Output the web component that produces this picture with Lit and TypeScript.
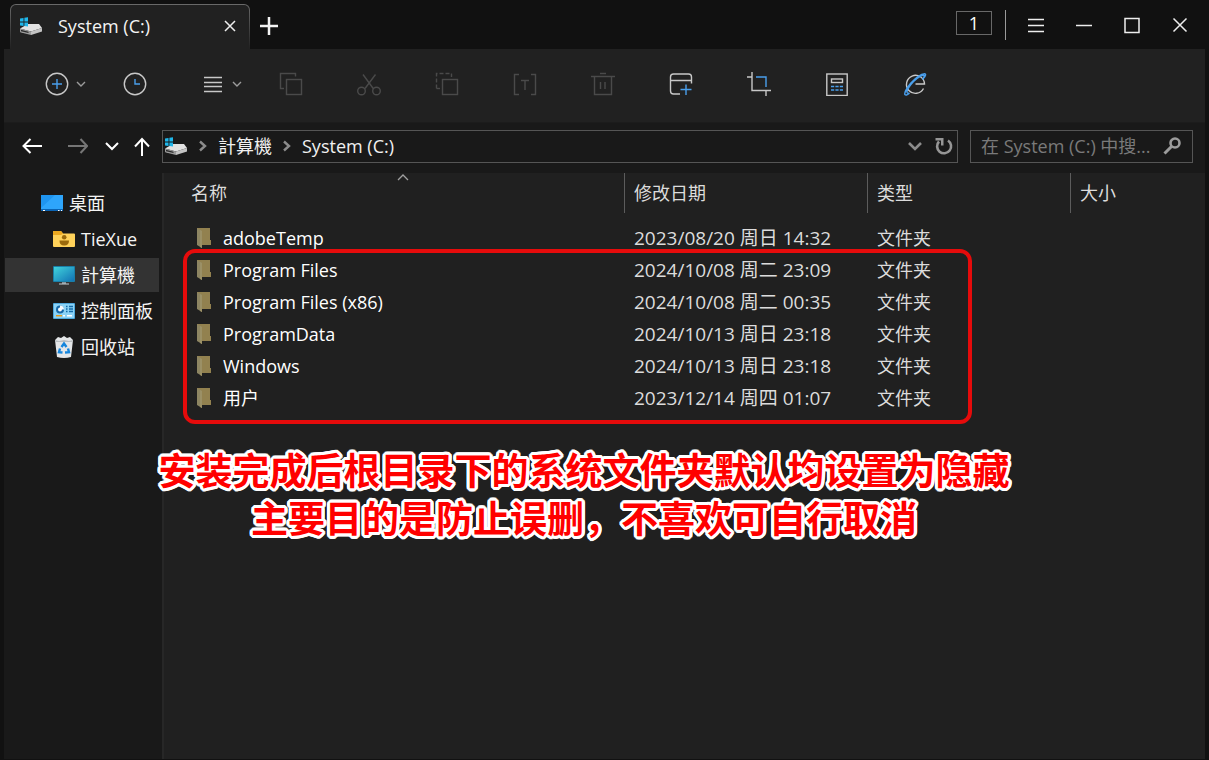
import { LitElement, html, svg, css, TemplateResult } from "lit";
import { customElement, property } from "lit/decorators.js";
import { classMap } from "lit/directives/class-map.js";

const drive = html`<svg class="drive" width="24" height="20" viewBox="0 0 24 20" aria-hidden="true">
  <path d="M1 12.500 L9 8 H20 L23 12 L12 15.500 Z" fill="#e2e2e2" />
  <path d="M1 12.500 L12 15.500 V19 L2 16.600 Q1 16.300 1 15.500 Z" fill="#9c9c9c" />
  <path d="M12 15.500 L23 12 V15.500 L12 19 Z" fill="#c4c4c4" />
  <path d="M2 13.800 L9.500 15.800 V17 L2 15.200 Z" fill="#2c2c2c" />
  <path d="M1 2.600 L4.500 2 V5.600 H1 Z M5.400 1.800 L9 1.200 V5.600 H5.400 Z M1 6.500 H4.500 V10 L1 9.500 Z M5.400 6.500 H9 V10.600 L5.400 10.100 Z" fill="#1fb6ea" />
</svg>`;

const crumbArrow = html`<svg width="10" height="14" viewBox="0 0 10 14" aria-hidden="true">
  <path d="M2 2.500 L7 7 L2 11.500" fill="none" stroke="#8c8c8c" stroke-width="2.400" />
</svg>`;

const smallChevron = html`<svg class="chev" width="12" height="12" viewBox="0 0 12 12" aria-hidden="true">
  <path d="M2 4 L6 8 L10 4" fill="none" stroke="#9c9c9c" stroke-width="1.400" />
</svg>`;

const tools: { label: string; icon: TemplateResult; off?: boolean; menu?: boolean }[] = [
  {
    label: "新建",
    menu: true,
    icon: svg`<circle cx="12" cy="12" r="10.700" /><path class="blue" d="M12 7 V17 M7 12 H17" />`,
  },
  {
    label: "历史",
    icon: svg`<circle cx="12" cy="12" r="10.700" /><path class="blue" d="M12 7 V12 H17" />`,
  },
  {
    label: "布局",
    menu: true,
    icon: svg`<path class="thin" d="M3 5.500 H21 M3 10.500 H21 M3 14.500 H21 M3 19.500 H21" />`,
  },
  {
    label: "复制",
    off: true,
    icon: svg`<path d="M16.500 4.500 V1.500 H1.500 V16.500 H5" /><rect x="7.500" y="7.500" width="15" height="15" />`,
  },
  {
    label: "剪切",
    off: true,
    icon: svg`<path d="M6 2.500 L16.200 16.500 M18.500 2.500 L8 16.500" /><circle cx="4.500" cy="19" r="3.800" /><circle cx="19.500" cy="19" r="3.800" />`,
  },
  {
    label: "粘贴",
    off: true,
    icon: svg`<path stroke-dasharray="4 2" d="M1.500 16.500 V1.500 H16.500 V5" /><path d="M1.500 16.500 H5" /><rect x="7.500" y="7.500" width="15" height="15" />`,
  },
  {
    label: "重命名",
    off: true,
    icon: svg`<path d="M6 2.500 H1.500 V22.500 H6 M18 2.500 H22.500 V22.500 H18 M8 8.500 H16 M12 8.500 V18" />`,
  },
  {
    label: "删除",
    off: true,
    icon: svg`<path d="M0 4.500 H24 M9 1.500 H15 M3.500 4.500 V22.500 H20.500 V4.500 M9.500 10 V17 M14 10 V17" />`,
  },
  {
    label: "新窗口",
    icon: svg`<path d="M11 22 H4.500 Q1.500 22 1.500 19 V5 Q1.500 2 4.500 2 H19.500 Q22.500 2 22.500 5 V11.500 M1.500 8.500 H22.500" /><path class="blue" d="M17 12.500 V23 M11.500 17.500 H22.500" />`,
  },
  {
    label: "截图",
    icon: svg`<path d="M0 5 H5 M5 0 V18.500 H24 M19 18.500 V24" /><path class="blue" d="M9 5 H19 V15" />`,
  },
  {
    label: "计算器",
    icon: svg`<rect x="1.800" y="2" width="20.400" height="21.500" /><rect x="6.500" y="7" width="11" height="3.500" /><path class="blue" stroke-dasharray="3.200 1.200" d="M6 14.500 H18 M6 18 H18" />`,
  },
  {
    label: "浏览器",
    icon: svg`<path d="M20.500 16.500 A9 9 0 1 1 21.500 12 H12.500" /><path class="blue" d="M19.500 7.500 C23.500 3.500 23.500 1 20.500 2 C15.500 3 8 10 4.500 15.500 C1 21 1 23.500 3.500 23 C4.500 22.800 5.500 22 6.500 21.200 C2.500 22 3.500 18 7.500 13 C11.500 8 17.500 3.500 20.500 3 C21.800 3 21.300 5 19.500 7.500" />`,
  },
];

const placeIcons = {
  desktop: svg`<rect y="3" width="22" height="16" fill="#1f95f0" /><path d="M0 16 L14 3 H22 V17 H0 Z" fill="#35adff" opacity=".7" /><rect y="17" width="22" height="2" fill="#0a64b4" /><path d="M2 18.500 H4 M17 18.500 H18.500 M20 18.500 H21" stroke="#fff" />`,
  user: svg`<path d="M0 4 Q0 3 1 3 H8 L10 5.500 H21 Q22 5.500 22 6.500 V18 Q22 19 21 19 H1 Q0 19 0 18 Z" fill="#ffd25a" /><path d="M0 4 Q0 3 1 3 H8 L10 5.500 L8 7 H0 Z" fill="#eda920" /><circle cx="11.200" cy="9.300" r="2.300" fill="#9b6a0c" /><path d="M6.500 12.500 H16 Q16 17.500 11.200 17.500 Q6.500 17.500 6.500 12.500 Z" fill="#9b6a0c" />`,
  computer: svg`<defs><linearGradient id="screen" x1="0" y1="0" x2="1" y2="1"><stop offset="0" stop-color="#40d3dc" /><stop offset="1" stop-color="#1273b4" /></linearGradient></defs><rect y="2" width="22" height="16" rx="1" fill="#1a7fa8" /><rect x="1" y="3" width="20" height="14" fill="url(#screen)" /><path d="M9 18 H13 V20 H9 Z" fill="#83939c" /><path d="M6 20 H16" stroke="#c5ccd0" />`,
  control: svg`<rect y="3" width="22" height="16" rx="1" fill="#4fa8dc" /><rect x="1" y="4" width="20" height="14" fill="#8bd3f7" /><circle cx="7" cy="9.500" r="4" fill="#1467a8" /><path d="M7 9.500 V5.500 A4 4 0 0 1 11 9.500 Z" fill="#f7fbff" /><circle cx="7" cy="9.500" r="2" fill="#f7fbff" /><path d="M13 6.500 H14.500 M16 6.500 H20 M13 9 H14.500 M16 9 H20 M13 11.500 H14.500 M16 11.500 H20" stroke="#146ba8" stroke-width="1.300" /><path d="M3 15.700 H9" stroke="#e89a18" stroke-width="1.400" /><path d="M10 15.700 H12 M14 15.700 H19" stroke="#fff" stroke-width="1.400" />`,
  bin: svg`<path d="M2 4 L5 1 L8 2 L11 0 L14 2 L17 1 L20 4 L18 21 Q11 23 4 21 Z" fill="#e4e6e8" /><path d="M2 4 L6 5 L11 4 L16 5 L20 4 L19.700 6 H2.300 Z" fill="#b9bdc0" /><path d="M8.500 11 L11 7.500 L13.500 11 M15 12.500 L16 16.200 L12 16.500 M9.500 16.500 L6 16.200 L7 12.500" fill="none" stroke="#1585dc" stroke-width="2.400" />`,
};

const places: { name: string; icon: TemplateResult; root?: boolean; active?: boolean }[] = [
  { name: "桌面", icon: placeIcons.desktop, root: true },
  { name: "TieXue", icon: placeIcons.user },
  { name: "計算機", icon: placeIcons.computer, active: true },
  { name: "控制面板", icon: placeIcons.control },
  { name: "回收站", icon: placeIcons.bin },
];

const files = [
  ["adobeTemp", "2023/08/20 周日 14:32"],
  ["Program Files", "2024/10/08 周二 23:09"],
  ["Program Files (x86)", "2024/10/08 周二 00:35"],
  ["ProgramData", "2024/10/13 周日 23:18"],
  ["Windows", "2024/10/13 周日 23:18"],
  ["用户", "2023/12/14 周四 01:07"],
];

const reset = css`
  :host {
    display: block;
  }
  * {
    box-sizing: border-box;
  }
  svg {
    display: block;
    flex: none;
  }
  button {
    display: flex;
    align-items: center;
    justify-content: center;
    padding: 0;
    border: 0;
    background: none;
    color: inherit;
    font: inherit;
  }
`;

@customElement("title-bar")
class TitleBar extends LitElement {
  static styles = [
    reset,
    css`
      .bar {
        display: flex;
        height: 49px;
        padding-right: 1px;
      }
      .tab {
        width: 240px;
        margin: 4px 0 0 6px;
        padding: 1px 1px 0;
        border-radius: 6px 6px 0 0;
        background: linear-gradient(#6a6a6a, #212121);
      }
      .face {
        display: flex;
        align-items: center;
        height: 100%;
        padding: 0 8px 2px;
        border-radius: 5px 5px 0 0;
        background: #212121;
        color: #f4f4f4;
      }
      .name {
        flex: 1;
        padding-left: 15px;
      }
      .close {
        width: 22px;
        height: 24px;
      }
      .add {
        width: 38px;
        padding-top: 2px;
      }
      .right {
        display: flex;
        margin-left: auto;
      }
      .count {
        width: 36px;
        height: 24px;
        margin-top: 11px;
        border: 1px solid #686868;
        color: #fff;
      }
      .rule {
        width: 1px;
        height: 30px;
        margin: 10px 6px 0 13px;
        background: #9a9a9a;
      }
      .ctl {
        width: 48px;
      }
    `,
  ];

  control(label: string, d: string) {
    return html`<button class="ctl" aria-label=${label}>
      <svg width="18" height="18" viewBox="0 0 18 18">
        <path d=${d} fill="none" stroke="#eee" stroke-width="1.500" />
      </svg>
    </button>`;
  }

  render() {
    return html`<header class="bar">
      <div class="tab">
        <div class="face">
          ${drive}
          <span class="name">System (C:)</span>
          <button class="close" aria-label="关闭标签">
            <svg width="12" height="12" viewBox="0 0 12 12">
              <path d="M1 1 L11 11 M11 1 L1 11" stroke="#eee" stroke-width="1.500" />
            </svg>
          </button>
        </div>
      </div>
      <button class="add" aria-label="新标签">
        <svg width="18" height="18" viewBox="0 0 18 18">
          <path d="M9 0 V18 M0 9 H18" stroke="#f4f4f4" stroke-width="2.500" />
        </svg>
      </button>
      <div class="right">
        <button class="count">1</button>
        <div class="rule"></div>
        ${this.control("菜单", "M1 3.500 H17 M1 9.500 H17 M1 15.500 H17")}
        ${this.control("最小化", "M1 9.500 H17")}
        ${this.control("最大化", "M2 2.500 H16 V16.500 H2 Z")}
        ${this.control("关闭", "M2.500 2.500 L15.500 15.500 M15.500 2.500 L2.500 15.500")}
      </div>
    </header>`;
  }
}

@customElement("tool-bar")
class ToolBar extends LitElement {
  static styles = [
    reset,
    css`
      .bar {
        display: flex;
        height: 73px;
        padding: 0 0 4px 41px;
        background: #212121;
      }
      .tool {
        width: 78px;
        justify-content: flex-start;
        gap: 6px;
      }
      .glyph {
        fill: none;
        stroke: #c8c8c8;
        stroke-width: 1.400;
      }
      .off .glyph {
        stroke: #4a4a4a;
      }
      .blue {
        stroke: #4a9fec;
      }
    `,
  ];

  render() {
    return html`<nav class="bar">
      ${tools.map(
        (t) => html`<button class=${classMap({ tool: true, off: !!t.off })} ?disabled=${t.off} aria-label=${t.label}>
          <svg class="glyph" width="24" height="24" viewBox="0 0 24 24">${t.icon}</svg>
          ${t.menu ? smallChevron : ""}
        </button>`
      )}
    </nav>`;
  }
}

@customElement("address-bar")
class AddressBar extends LitElement {
  static styles = [
    reset,
    css`
      .bar {
        display: flex;
        align-items: center;
        height: 51px;
        padding: 0 12px 4px 16px;
        border-top: 1px solid #1c1c1c;
        background: #191919;
      }
      .arrows {
        display: flex;
        flex: none;
        width: 142px;
      }
      .arrow {
        height: 32px;
        width: 46px;
        justify-content: flex-start;
        color: #fff;
      }
      .forward {
        width: 36px;
        color: #767676;
      }
      .recent {
        width: 20px;
        justify-content: center;
      }
      .up {
        width: 40px;
        justify-content: center;
      }
      .path,
      .search {
        display: flex;
        align-items: center;
        height: 33px;
        border: 1px solid #555;
      }
      .path {
        flex: 1;
        padding: 0 4px 0 1px;
        gap: 10px;
        color: #f0f0f0;
      }
      .expand {
        margin-left: auto;
        width: 20px;
      }
      .reload {
        width: 18px;
      }
      .search {
        width: 223px;
        margin-left: 12px;
        padding: 0 11px 0 10px;
        gap: 8px;
      }
      .box {
        flex: 1;
        min-width: 0;
        padding: 0;
        border: 0;
        outline: 0;
        background: none;
        color: #ddd;
        font: inherit;
      }
      .box::placeholder {
        color: #7a7a7a;
        opacity: 1;
      }
    `,
  ];

  icon(d: string, w = 22, sw = 2) {
    return html`<svg width=${w} height="22" viewBox="0 0 ${w} 22">
      <path d=${d} fill="none" stroke="currentColor" stroke-width=${sw} />
    </svg>`;
  }

  render() {
    return html`<div class="bar">
      <div class="arrows">
        <button class="arrow" aria-label="后退">${this.icon("M10.500 4 L3.500 11 L10.500 18 M3.500 11 H22")}</button>
        <button class="arrow forward" aria-label="前进">${this.icon("M14.500 4 L21 11 L14.500 18 M21 11 H2")}</button>
        <button class="arrow recent" aria-label="最近位置">${this.icon("M2 8 L8 14 L14 8", 16)}</button>
        <button class="arrow up" aria-label="向上">${this.icon("M10 21 V4 M3 11.500 L10 4 L17 11.500", 20)}</button>
      </div>
      <div class="path">
        ${drive} ${crumbArrow}
        <button>計算機</button>
        ${crumbArrow}
        <button>System (C:)</button>
        <button class="expand" aria-label="展开">
          <svg width="16" height="14" viewBox="0 0 16 14">
            <path d="M2 4 L8 10 L14 4" fill="none" stroke="#8c8c8c" stroke-width="2.600" />
          </svg>
        </button>
        <button class="reload" aria-label="刷新">
          <svg width="18" height="18" viewBox="0 0 18 18">
            <path d="M13 3.500 A7 7 0 1 1 4 4.500" fill="none" stroke="#969696" stroke-width="2.600" />
            <path d="M0.500 1 H8.500 V8.500 H6 V3.500 H0.500 Z" fill="#969696" />
          </svg>
        </button>
      </div>
      <label class="search">
        <input class="box" type="text" aria-label="搜索" placeholder="在 System (C:) 中搜..." />
        <svg width="18" height="18" viewBox="0 0 18 18" aria-hidden="true">
          <circle cx="12" cy="6" r="4.500" fill="none" stroke="#9c9c9c" stroke-width="2.600" />
          <path d="M8.500 9.500 L1.500 16.500" stroke="#9c9c9c" stroke-width="3" />
        </svg>
      </label>
    </div>`;
  }
}

@customElement("place-list")
class PlaceList extends LitElement {
  static styles = [
    reset,
    css`
      .list {
        display: flex;
        flex-direction: column;
        gap: 2px;
        margin: 0;
        padding: 13px 3px 0 1px;
        list-style: none;
      }
      .place {
        display: flex;
        align-items: center;
        gap: 6px;
        height: 34px;
        padding-left: 48px;
        color: #f4f4f4;
        text-decoration: none;
        white-space: nowrap;
      }
      .root {
        padding-left: 36px;
      }
      .active {
        background: #333;
      }
    `,
  ];

  render() {
    return html`<ul class="list">
      ${places.map(
        (p) => html`<li>
          <a class=${classMap({ place: true, root: !!p.root, active: !!p.active })} href="#">
            <svg width="22" height="22" viewBox="0 0 22 22" aria-hidden="true">${p.icon}</svg>
            ${p.name}
          </a>
        </li>`
      )}
    </ul>`;
  }
}

@customElement("file-table")
class FileTable extends LitElement {
  @property({ attribute: false }) rows: string[][] = [];

  static styles = [
    reset,
    css`
      .files {
        width: 100%;
        border-collapse: collapse;
        table-layout: fixed;
        color: #dcdcdc;
      }
      .date {
        width: 243px;
      }
      .type {
        width: 203px;
      }
      .size {
        width: 135px;
      }
      th {
        position: relative;
        padding: 0 0 9px;
        font-weight: 400;
        text-align: left;
      }
      .head {
        display: flex;
        align-items: center;
        height: 40px;
        padding-left: 9px;
        border-left: 1px solid #5c5c5c;
      }
      .first {
        padding-left: 27px;
        border: 0;
      }
      .sort {
        position: absolute;
        left: 50%;
        top: 0;
      }
      td {
        height: 32px;
        padding: 0 0 0 10px;
        white-space: nowrap;
      }
      .name {
        padding-left: 31px;
        color: #fff;
      }
      .when {
        font-size: 19px;
      }
      .entry {
        display: flex;
        align-items: center;
        gap: 10px;
      }
    `,
  ];

  render() {
    return html`<table class="files">
      <colgroup>
        <col />
        <col class="date" />
        <col class="type" />
        <col class="size" />
      </colgroup>
      <thead>
        <tr>
          <th>
            <div class="head first">名称</div>
            <svg class="sort" width="18" height="10" viewBox="0 0 18 10" aria-hidden="true">
              <path d="M4 7 L9 2 L14 7" fill="none" stroke="#a0a0a0" stroke-width="1.300" />
            </svg>
          </th>
          <th><div class="head">修改日期</div></th>
          <th><div class="head">类型</div></th>
          <th><div class="head">大小</div></th>
        </tr>
      </thead>
      <tbody>
        ${this.rows.map(
          ([name, date]) => html`<tr>
            <td class="name">
              <div class="entry">
                <svg width="18" height="22" viewBox="0 0 18 22" aria-hidden="true">
                  <path d="M2 1 H15 V13 H16 V18 H6 L2 16 Z" fill="#92814f" />
                  <path d="M2 1 L7 4 V21 L2 18 Z" fill="#8d8562" />
                  <path d="M7 4 V21 L5 20 V3 Z" fill="#9b9066" />
                </svg>
                ${name}
              </div>
            </td>
            <td class="when">${date}</td>
            <td>文件夹</td>
            <td></td>
          </tr>`
        )}
      </tbody>
    </table>`;
  }
}

@customElement("app-root")
class AppRoot extends LitElement {
  static styles = [
    reset,
    css`
      :host {
        font-family: "Open Sans", "Noto Sans CJK SC", sans-serif;
        font-size: 18px;
        line-height: 24px;
        background: #111;
      }
      .window {
        display: flex;
        flex-direction: column;
        min-height: 100vh;
        padding: 0 4px 1px;
      }
      .body {
        display: flex;
        flex: 1;
        background: #191919;
      }
      .side {
        flex: none;
        width: 158px;
      }
      .pane {
        position: relative;
        flex: 1;
        border-left: 2px solid #272727;
        background: #202020;
      }
      .frame {
        position: absolute;
        top: 76px;
        left: 19px;
        right: 233px;
        height: 175px;
        border: 4px solid #e60b0b;
        border-radius: 12px;
      }
      .note {
        position: absolute;
        top: 276px;
        left: -10px;
        right: 191px;
        margin: 0;
        color: #f00;
        font-family: "Liberation Sans", "Noto Sans CJK SC", sans-serif;
        font-size: 37px;
        font-weight: 700;
        line-height: 48px;
        text-align: center;
        white-space: nowrap;
        text-shadow:
          3px 0 #fff, 3px 1px #fff, 2px 2px #fff, 1px 3px #fff,
          0 3px #fff, -1px 3px #fff, -2px 2px #fff, -3px 1px #fff,
          -3px 0 #fff, -3px -1px #fff, -2px -2px #fff, -1px -3px #fff,
          0 -3px #fff, 1px -3px #fff, 2px -2px #fff, 3px -1px #fff;
      }
    `,
  ];

  render() {
    return html`<div class="window">
      <title-bar></title-bar>
      <tool-bar></tool-bar>
      <address-bar></address-bar>
      <div class="body">
        <aside class="side"><place-list></place-list></aside>
        <main class="pane">
          <file-table .rows=${files}></file-table>
          <div class="frame"></div>
          <p class="note">安装完成后根目录下的系统文件夹默认均设置为隐藏<br />主要目的是防止误删，不喜欢可自行取消</p>
        </main>
      </div>
    </div>`;
  }
}
